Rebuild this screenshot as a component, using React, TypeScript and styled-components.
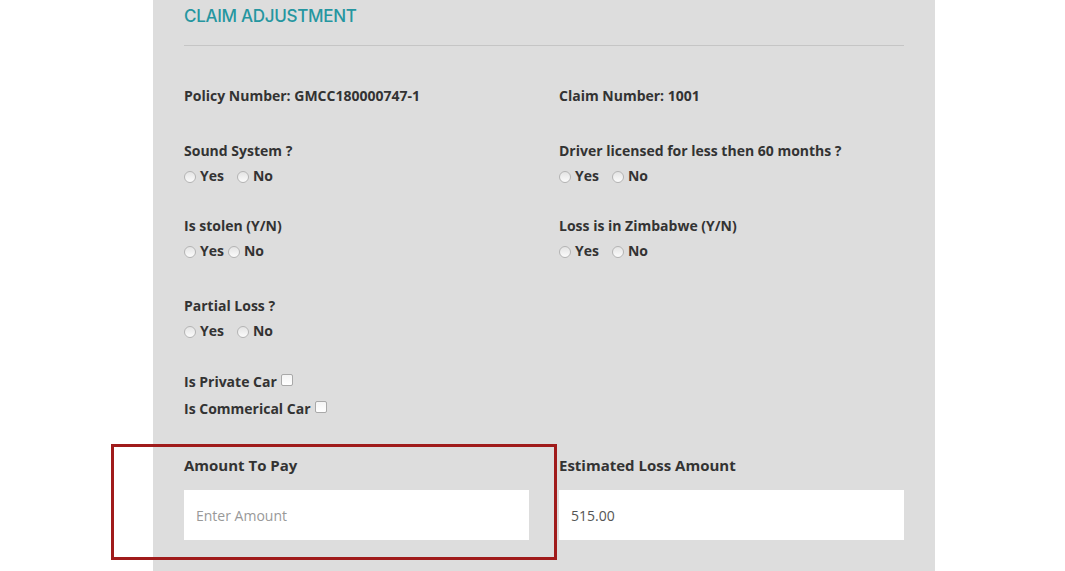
import React from "react";
import styled, { createGlobalStyle } from "styled-components";

const Global = createGlobalStyle`
  html, body { margin: 0; padding: 0; background: #ffffff; }
  body { font-family: "Open Sans", "Liberation Sans", sans-serif; color: #333333; }
  * { box-sizing: border-box; }
`;

const Page = styled.div`
  display: flex;
  min-height: 571px;
  padding-left: 153px;
`;

const Panel = styled.section`
  width: 782px;
  background: #dddddd;
  padding: 0 31px 30px;
`;

const Heading = styled.h2`
  margin: 0;
  height: 33px;
  line-height: 33px;
  font-family: "Inter", "Noto Sans", sans-serif;
  font-weight: 500;
  font-size: 17px;
  color: #2596a0;
  letter-spacing: -0.3px;
`;

const Rule = styled.hr`
  margin: 12px 0 0;
  border: 0;
  border-top: 1px solid #c5c5c5;
`;

const Grid = styled.div<{ $mt: number }>`
  display: grid;
  grid-template-columns: 345px 345px;
  column-gap: 30px;
  margin-top: ${(p) => p.$mt}px;
`;

const Text = styled.div`
  font-size: 14px;
  font-weight: 700;
  line-height: 20px;
  color: #333333;
`;

const Group = styled.div``;

const Label = styled(Text)`
  margin-bottom: 5px;
`;

const RadioRow = styled.div`
  display: flex;
  align-items: center;
  height: 20px;
`;

const Option = styled.label<{ $gap: number }>`
  display: inline-flex;
  align-items: center;
  font-size: 14px;
  font-weight: 700;
  line-height: 20px;
  color: #333333;
  margin-right: ${(p) => p.$gap}px;
`;

const Radio = styled.input.attrs({ type: "radio" })`
  appearance: none;
  width: 12px;
  height: 12px;
  margin: 1px 4px 0 0;
  border-radius: 50%;
  border: 1px solid #b4b4b4;
  background: linear-gradient(#e4e4e4, #fbfbfb);
`;

const CheckLine = styled(Text)<{ $mt: number }>`
  display: flex;
  align-items: center;
  margin-top: ${(p) => p.$mt}px;
`;

const Check = styled.input.attrs({ type: "checkbox" })`
  appearance: none;
  width: 12px;
  height: 12px;
  margin: 0 0 5px 4px;
  border-radius: 2px;
  border: 1px solid #a9a9a9;
  background: linear-gradient(#f4f4f4, #ffffff);
`;

const Field = styled.div`
  position: relative;
`;

const FieldLabel = styled.div`
  font-size: 15px;
  font-weight: 700;
  line-height: 18px;
  color: #333333;
  margin-bottom: 16px;
`;

const Input = styled.input`
  display: block;
  width: 100%;
  height: 50px;
  border: 0;
  padding: 0 12px;
  background: #ffffff;
  font-family: "Open Sans", "Liberation Sans", sans-serif;
  font-size: 14px;
  color: #555555;
  outline: none;
  &::placeholder { color: #999999; }
`;

const Highlight = styled.div`
  position: absolute;
  left: -73px;
  top: -12px;
  right: -28px;
  bottom: -20px;
  border: 3px solid #a01b1b;
  pointer-events: none;
`;

function YesNo({ name, gap }: { name: string; gap: number }) {
  return (
    <RadioRow>
      <Option $gap={gap}>
        <Radio name={name} />
        Yes
      </Option>
      <Option $gap={0}>
        <Radio name={name} />
        No
      </Option>
    </RadioRow>
  );
}

export default function App() {
  return (
    <>
      <Global />
      <Page>
        <Panel>
          <Heading>CLAIM ADJUSTMENT</Heading>
          <Rule />
          <Grid $mt={40}>
            <Text>Policy Number: GMCC180000747-1</Text>
            <Text>Claim Number: 1001</Text>
          </Grid>
          <Grid $mt={35}>
            <Group>
              <Label>Sound System ?</Label>
              <YesNo name="sound" gap={13} />
            </Group>
            <Group>
              <Label>Driver licensed for less then 60 months ?</Label>
              <YesNo name="driver" gap={13} />
            </Group>
          </Grid>
          <Grid $mt={30}>
            <Group>
              <Label>Is stolen (Y/N)</Label>
              <YesNo name="stolen" gap={4} />
            </Group>
            <Group>
              <Label>Loss is in Zimbabwe (Y/N)</Label>
              <YesNo name="zim" gap={13} />
            </Group>
          </Grid>
          <Grid $mt={35}>
            <Group>
              <Label>Partial Loss ?</Label>
              <YesNo name="partial" gap={13} />
            </Group>
          </Grid>
          <CheckLine $mt={31}>
            Is Private Car <Check />
          </CheckLine>
          <CheckLine $mt={7}>
            Is Commerical Car <Check />
          </CheckLine>
          <Grid $mt={37}>
            <Field>
              <FieldLabel>Amount To Pay</FieldLabel>
              <Input placeholder="Enter Amount" />
              <Highlight />
            </Field>
            <Field>
              <FieldLabel>Estimated Loss Amount</FieldLabel>
              <Input defaultValue="515.00" />
            </Field>
          </Grid>
        </Panel>
      </Page>
    </>
  );
}
